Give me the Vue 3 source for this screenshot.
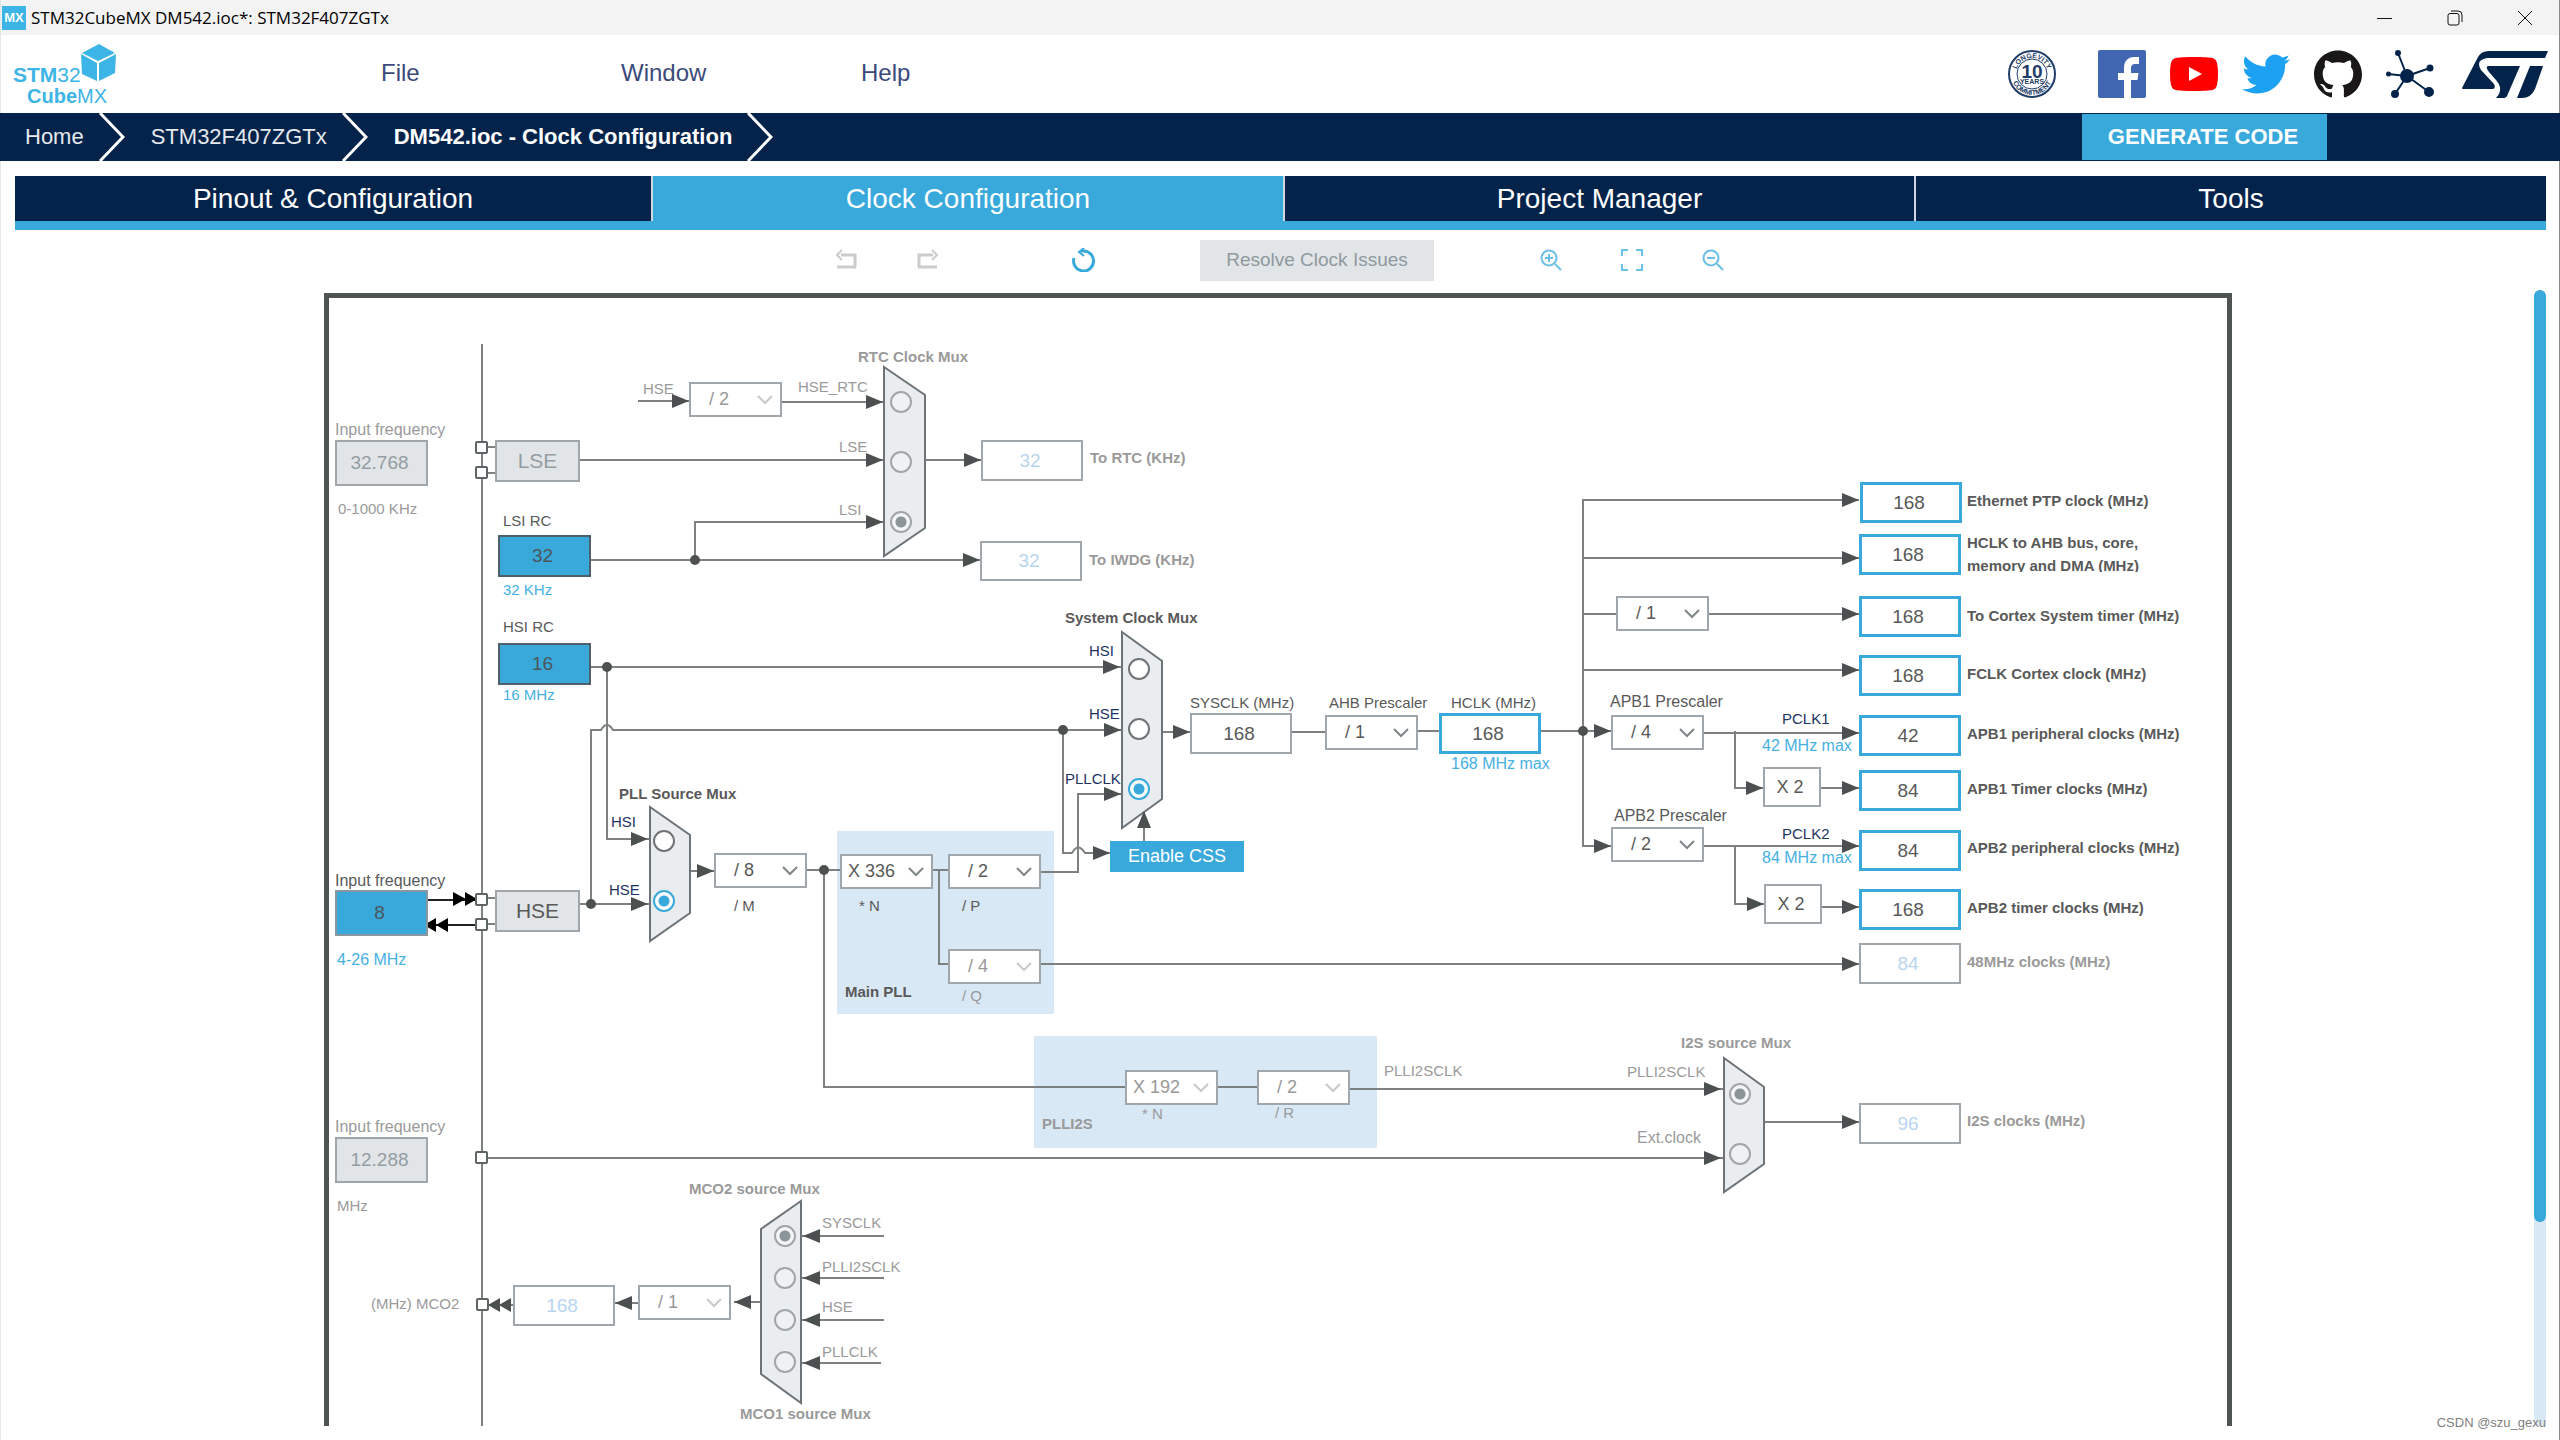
<script setup>
import { ref } from 'vue'

const menus = ['File', 'Window', 'Help']
const tabs = ['Pinout & Configuration', 'Clock Configuration', 'Project Manager', 'Tools']
const activeTab = ref('Clock Configuration')

// World coordinates of the canvas' top left corner
const ORIGIN = { x: 324, y: 293 }
const at = (x, y) => ({ left: `${x - ORIGIN.x}px`, top: `${y - ORIGIN.y}px` })
const box = (n) => ({ ...at(n.x, n.y), width: `${n.w}px`, height: `${n.h}px` })

// Text labels: y is the baseline
const labels = [
  { t: 'Input frequency', x: 335, y: 435, c: 'dim big', f: 'in-lse' },
  { t: '0-1000 KHz', x: 338, y: 514, c: 'dim' },
  { t: 'LSI RC', x: 503, y: 526, c: '', f: 'lsi' },
  { t: '32 KHz', x: 503, y: 595, c: 'blue' },
  { t: 'HSI RC', x: 503, y: 632, c: '', f: 'hsi' },
  { t: '16 MHz', x: 503, y: 700, c: 'blue' },
  { t: 'HSE', x: 643, y: 394, c: 'dim', f: 'rtc-div' },
  { t: 'HSE_RTC', x: 798, y: 392, c: 'dim', f: 'rtc-0' },
  { t: 'LSE', x: 839, y: 452, c: 'dim', f: 'rtc-1' },
  { t: 'LSI', x: 839, y: 515, c: 'dim', f: 'rtc-2' },
  { t: 'RTC Clock Mux', x: 858, y: 362, c: 'dim bold' },
  { t: 'To RTC (KHz)', x: 1090, y: 463, c: 'dim bold', f: 'o-rtc' },
  { t: 'To IWDG (KHz)', x: 1089, y: 565, c: 'dim bold', f: 'o-iwdg' },
  { t: 'System Clock Mux', x: 1065, y: 623, c: 'bold' },
  { t: 'HSI', x: 1089, y: 656, c: 'navy', f: 'sys-0' },
  { t: 'HSE', x: 1089, y: 719, c: 'navy', f: 'sys-1' },
  { t: 'PLLCLK', x: 1065, y: 784, c: 'navy', f: 'sys-2' },
  { t: 'SYSCLK (MHz)', x: 1190, y: 708, c: '', f: 'o-sysclk' },
  { t: 'AHB Prescaler', x: 1329, y: 708, c: '', f: 'ahb' },
  { t: 'HCLK (MHz)', x: 1451, y: 708, c: '', f: 'o-hclk' },
  { t: '168 MHz max', x: 1451, y: 769, c: 'blue big' },
  { t: 'APB1 Prescaler', x: 1610, y: 707, c: 'big', f: 'apb1' },
  { t: 'PCLK1', x: 1782, y: 724, c: 'navy' },
  { t: '42 MHz max', x: 1762, y: 751, c: 'blue big' },
  { t: 'APB2 Prescaler', x: 1614, y: 821, c: 'big', f: 'apb2' },
  { t: 'PCLK2', x: 1782, y: 839, c: 'navy' },
  { t: '84 MHz max', x: 1762, y: 863, c: 'blue big' },
  { t: 'Ethernet PTP clock (MHz)', x: 1967, y: 506, c: 'bold', f: 'o-eth' },
  { t: 'HCLK to AHB bus, core,\nmemory and DMA (MHz)', x: 1967, y: 546, c: 'bold cut', f: 'o-ahb' },
  { t: 'To Cortex System timer (MHz)', x: 1967, y: 621, c: 'bold', f: 'o-cortex' },
  { t: 'FCLK Cortex clock (MHz)', x: 1967, y: 679, c: 'bold', f: 'o-fclk' },
  { t: 'APB1 peripheral clocks (MHz)', x: 1967, y: 739, c: 'bold', f: 'o-apb1p' },
  { t: 'APB1 Timer clocks (MHz)', x: 1967, y: 794, c: 'bold', f: 'o-apb1t' },
  { t: 'APB2 peripheral clocks (MHz)', x: 1967, y: 853, c: 'bold', f: 'o-apb2p' },
  { t: 'APB2 timer clocks (MHz)', x: 1967, y: 913, c: 'bold', f: 'o-apb2t' },
  { t: '48MHz clocks (MHz)', x: 1967, y: 967, c: 'dim bold', f: 'o-48' },
  { t: 'I2S clocks (MHz)', x: 1967, y: 1126, c: 'dim bold', f: 'o-i2s' },
  { t: 'Input frequency', x: 335, y: 886, c: 'big', f: 'in-hse' },
  { t: '4-26 MHz', x: 337, y: 965, c: 'blue big' },
  { t: 'PLL Source Mux', x: 619, y: 799, c: 'bold' },
  { t: 'HSI', x: 611, y: 827, c: 'navy', f: 'pll-0' },
  { t: 'HSE', x: 609, y: 895, c: 'navy', f: 'pll-1' },
  { t: '/ M', x: 734, y: 911, c: '', f: 'div-m' },
  { t: '* N', x: 859, y: 911, c: '', f: 'mul-n' },
  { t: '/ P', x: 962, y: 911, c: '', f: 'div-p' },
  { t: '/ Q', x: 962, y: 1001, c: 'dim', f: 'div-q' },
  { t: 'Main PLL', x: 845, y: 997, c: 'bold' },
  { t: '* N', x: 1142, y: 1119, c: 'dim', f: 'i2s-n' },
  { t: '/ R', x: 1275, y: 1118, c: 'dim', f: 'i2s-r' },
  { t: 'PLLI2S', x: 1042, y: 1129, c: 'dim bold' },
  { t: 'PLLI2SCLK', x: 1384, y: 1076, c: 'dim' },
  { t: 'I2S source Mux', x: 1681, y: 1048, c: 'dim bold' },
  { t: 'PLLI2SCLK', x: 1627, y: 1077, c: 'dim', f: 'i2s-0' },
  { t: 'Ext.clock', x: 1637, y: 1143, c: 'dim big', f: 'i2s-1' },
  { t: 'Input frequency', x: 335, y: 1132, c: 'dim big', f: 'in-i2s' },
  { t: 'MHz', x: 337, y: 1211, c: 'dim' },
  { t: '(MHz) MCO2', x: 371, y: 1309, c: 'dim', f: 'o-mco2' },
  { t: 'MCO2 source Mux', x: 689, y: 1194, c: 'dim bold' },
  { t: 'MCO1 source Mux', x: 740, y: 1419, c: 'dim bold' },
  { t: 'SYSCLK', x: 822, y: 1228, c: 'dim', f: 'mco-0' },
  { t: 'PLLI2SCLK', x: 822, y: 1272, c: 'dim', f: 'mco-1' },
  { t: 'HSE', x: 822, y: 1312, c: 'dim', f: 'mco-2' },
  { t: 'PLLCLK', x: 822, y: 1357, c: 'dim', f: 'mco-3' },
]

const fields = [
  { id: 'in-lse', v: '32.768', x: 335, y: 440, w: 93, h: 46, c: 'gray' },
  { id: 'lsi', v: '32', x: 498, y: 535, w: 93, h: 42, c: 'source' },
  { id: 'hsi', v: '16', x: 498, y: 643, w: 93, h: 42, c: 'source' },
  { id: 'in-hse', v: '8', x: 335, y: 890, w: 93, h: 46, c: 'source soft' },
  { id: 'in-i2s', v: '12.288', x: 335, y: 1137, w: 93, h: 46, c: 'gray' },
  { id: 'o-rtc', v: '32', x: 981, y: 440, w: 102, h: 41, c: 'off' },
  { id: 'o-iwdg', v: '32', x: 980, y: 541, w: 102, h: 40, c: 'off' },
  { id: 'o-sysclk', v: '168', x: 1190, y: 713, w: 102, h: 41, c: 'plain' },
  { id: 'o-hclk', v: '168', x: 1439, y: 713, w: 102, h: 41, c: 'on' },
  { id: 'o-eth', v: '168', x: 1860, y: 482, w: 102, h: 41, c: 'on' },
  { id: 'o-ahb', v: '168', x: 1859, y: 534, w: 102, h: 41, c: 'on' },
  { id: 'o-cortex', v: '168', x: 1859, y: 596, w: 102, h: 41, c: 'on' },
  { id: 'o-fclk', v: '168', x: 1859, y: 655, w: 102, h: 41, c: 'on' },
  { id: 'o-apb1p', v: '42', x: 1859, y: 715, w: 102, h: 41, c: 'on' },
  { id: 'o-apb1t', v: '84', x: 1859, y: 770, w: 102, h: 41, c: 'on' },
  { id: 'o-apb2p', v: '84', x: 1859, y: 830, w: 102, h: 41, c: 'on' },
  { id: 'o-apb2t', v: '168', x: 1859, y: 889, w: 102, h: 41, c: 'on' },
  { id: 'o-48', v: '84', x: 1859, y: 943, w: 102, h: 41, c: 'off' },
  { id: 'o-i2s', v: '96', x: 1859, y: 1103, w: 102, h: 41, c: 'off' },
  { id: 'o-mco2', v: '168', x: 513, y: 1285, w: 102, h: 41, c: 'off' },
]

const combos = [
  { id: 'rtc-div', v: '/ 2', x: 689, y: 382, off: true },
  { id: 'ahb', v: '/ 1', x: 1325, y: 715 },
  { id: 'cortex-div', v: '/ 1', x: 1616, y: 596, name: 'Cortex prescaler' },
  { id: 'apb1', v: '/ 4', x: 1611, y: 715 },
  { id: 'apb2', v: '/ 2', x: 1611, y: 827 },
  { id: 'div-m', v: '/ 8', x: 714, y: 853 },
  { id: 'mul-n', v: 'X 336', x: 840, y: 854, wide: true },
  { id: 'div-p', v: '/ 2', x: 948, y: 854 },
  { id: 'div-q', v: '/ 4', x: 948, y: 949, off: true },
  { id: 'i2s-n', v: 'X 192', x: 1125, y: 1070, wide: true, off: true },
  { id: 'i2s-r', v: '/ 2', x: 1257, y: 1070, off: true },
  { id: 'mco-div', v: '/ 1', x: 638, y: 1285, off: true, name: 'MCO2 prescaler' },
]

const blocks = [
  { t: 'LSE', x: 495, y: 440, w: 85, h: 42, c: 'osc dimmed' },
  { t: 'HSE', x: 495, y: 890, w: 85, h: 42, c: 'osc' },
  { t: 'X 2', x: 1763, y: 767, w: 58, h: 40, c: 'times' },
  { t: 'X 2', x: 1764, y: 884, w: 58, h: 40, c: 'times' },
]

const muxes = [
  { id: 'rtc', x: 901, ys: [402, 462, 522], sel: 2, off: true },
  { id: 'sys', x: 1139, ys: [669, 729, 789], sel: 2 },
  { id: 'pll', x: 664, ys: [841, 901], sel: 1 },
  { id: 'i2s', x: 1740, ys: [1094, 1154], sel: 0, off: true },
  { id: 'mco', x: 785, ys: [1236, 1278, 1320, 1362], sel: 0, off: true },
]

const muxShapes = [
  '884,367 925,395 925,528 884,556',
  '1122,632 1162,661 1162,799 1122,828',
  '650,807 690,835 690,913 650,941',
  '1724,1058 1764,1087 1764,1164 1724,1192',
  '801,1201 761,1229 761,1374 801,1403',
]

const wires = [
  'M482 344V1426',
  'M482 447H495M482 473H495M482 898H496M482 924H496',
  'M638 401H689M782 402H884',
  'M580 460H884M925 460H981',
  'M591 560H980M695 560V522H884',
  'M591 667H1122M607 667V839H650',
  'M580 904H650M591 904V730H601Q607 720 613 730H1122',
  'M1063 730V853H1072Q1078 842 1085 853H1110M1144 841V812',
  'M690 871H714M807 870H840M824 870V1087H1125M933 870H948M939 870V964H948',
  'M1041 872H1078V794H1122M1041 964H1859',
  'M1162 732H1190M1292 732H1325M1418 731H1439M1541 731H1611',
  'M1859 500H1583V846H1611M1583 558H1859M1583 614H1616M1709 614H1859M1583 670H1859',
  'M1704 733H1859M1735 731V788H1763M1821 788H1859',
  'M1704 846H1859M1735 846V904H1764M1822 907H1859',
  'M1218 1087H1257M1350 1089H1724M487 1158H1724M1764 1122H1859',
  'M801 1236H884M801 1278H884M801 1320H884M801 1363H881M761 1302H734M638 1303H615M513 1305H488',
]

// Arrow heads: tip position and direction
const heads = [
  [689, 401, 'r'], [883, 402, 'r'], [883, 460, 'r'], [883, 522, 'r'], [981, 460, 'r'], [980, 560, 'r'],
  [1120, 667, 'r'], [1121, 730, 'r'], [1121, 794, 'r'], [1110, 853, 'r'], [1190, 732, 'r'], [1144, 811, 'u'],
  [648, 839, 'r'], [648, 904, 'r'], [714, 871, 'r'],
  [1859, 500, 'r'], [1859, 558, 'r'], [1859, 614, 'r'], [1859, 670, 'r'], [1859, 733, 'r'], [1859, 788, 'r'],
  [1859, 846, 'r'], [1859, 907, 'r'], [1859, 964, 'r'], [1859, 1122, 'r'],
  [1611, 731, 'r'], [1611, 846, 'r'], [1763, 788, 'r'], [1764, 904, 'r'],
  [1721, 1089, 'r'], [1721, 1158, 'r'],
  [803, 1236, 'l'], [803, 1278, 'l'], [803, 1320, 'l'], [803, 1363, 'l'], [734, 1302, 'l'], [615, 1303, 'l'],
]
const headPoints = ([x, y, d]) =>
  d === 'r' ? `${x - 17},${y - 7} ${x},${y} ${x - 17},${y + 7}`
  : d === 'l' ? `${x + 17},${y - 7} ${x},${y} ${x + 17},${y + 7}`
  : `${x - 7},${y + 17} ${x},${y} ${x + 7},${y + 17}`

const dots = [[695, 560], [607, 667], [1063, 730], [591, 904], [824, 870], [1583, 731]]
const pins = [[476, 442], [476, 467], [476, 894], [476, 919], [476, 1152], [477, 1299]]
</script>

<template>
  <div class="app">
    <header class="titlebar">
      <span class="mx">MX</span>
      <span class="title">STM32CubeMX DM542.ioc*: STM32F407ZGTx</span>
      <div class="win">
        <button aria-label="Minimize"><svg width="16" height="16"><path d="M0 8.5H15" /></svg></button>
        <button aria-label="Restore"><svg width="16" height="16"><rect x="1" y="3.5" width="11" height="11.5" rx="2" /><path d="M4 1H11Q15 1 15 5V12" /></svg></button>
        <button aria-label="Close"><svg width="16" height="16"><path d="M1 1L15 15M15 1L1 15" /></svg></button>
      </div>
    </header>

    <div class="brand">
      <svg class="logo" width="110" height="64" viewBox="0 0 110 64" role="img" aria-label="STM32 CubeMX">
        <g fill="#3cb4e6">
          <polygon points="86,0 102,9 85,17 69,9" />
          <polygon points="68,10 84,19 84,37 69,30" />
          <polygon points="103,10 86,19 86,37 102,29" />
          <text x="0" y="38" font-size="21"><tspan font-weight="bold">STM</tspan>32</text>
          <text x="14" y="59" font-size="20"><tspan font-weight="bold">Cube</tspan>MX</text>
        </g>
      </svg>
      <nav class="menu">
        <button v-for="m in menus" :key="m">{{ m }}</button>
      </nav>
      <div class="links">
        <a class="badge" href="#" aria-label="10 years longevity commitment">
          <svg width="48" height="48" viewBox="0 0 48 48" fill="none" stroke="#1f3d68">
            <path id="arc-top" d="M8 24A16 16 0 0 1 40 24" stroke="none" />
            <path id="arc-bottom" d="M3 24A21 21 0 0 0 45 24" stroke="none" />
            <circle cx="24" cy="24" r="23" stroke-width="2" />
            <circle cx="24" cy="24" r="15" stroke-width="1" />
            <g fill="#1f3d68" stroke="none" font-weight="bold" text-anchor="middle">
              <text font-size="7"><textPath href="#arc-top" startOffset="50%">LONGEVITY</textPath></text>
              <text font-size="7"><textPath href="#arc-bottom" startOffset="50%">COMMITMENT</textPath></text>
              <text x="24" y="28" font-size="19">10</text>
              <text x="24" y="34" font-size="7">YEARS</text>
            </g>
          </svg>
        </a>
        <a href="#" aria-label="Facebook">
          <svg width="48" height="48" viewBox="0 0 48 48">
            <rect width="48" height="48" rx="2" fill="#4267b2" />
            <path fill="#fff" d="M26 48V30H20V23H26V18C26 11 30 7 36 7H41V14H37.500C34 14 33 16 33 18.500V23H40.500L39.500 30H33V48Z" />
          </svg>
        </a>
        <a href="#" aria-label="YouTube">
          <svg width="48" height="48" viewBox="0 0 48 48">
            <path fill="#f00" d="M24 7C34 7 40 7.500 42.500 8Q46 9 47 13Q48 17 48 24T47 35Q46 39 42.500 40C40 40.500 34 41 24 41S8 40.500 5.500 40Q2 39 1 35Q0 31 0 24T1 13Q2 9 5.500 8C8 7.500 14 7 24 7Z" />
            <polygon fill="#fff" points="19,17 32,24 19,31" />
          </svg>
        </a>
        <a href="#" aria-label="Twitter">
          <svg width="48" height="48" viewBox="0 0 24 24"><path fill="#1da1f2" d="M23.953 4.570a10 10 0 01-2.825.775 4.958 4.958 0 002.163-2.723c-.951.555-2.005.959-3.127 1.184a4.920 4.920 0 00-8.384 4.482C7.690 8.095 4.067 6.130 1.640 3.162a4.822 4.822 0 00-.666 2.475c0 1.710.870 3.213 2.188 4.096a4.904 4.904 0 01-2.228-.616v.060a4.923 4.923 0 003.946 4.827 4.996 4.996 0 01-2.212.085 4.936 4.936 0 004.604 3.417 9.867 9.867 0 01-6.102 2.105c-.390 0-.779-.023-1.170-.067a13.995 13.995 0 007.557 2.209c9.053 0 13.998-7.496 13.998-13.985 0-.210 0-.420-.015-.630A9.935 9.935 0 0024 4.590z" /></svg>
        </a>
        <a href="#" aria-label="GitHub">
          <svg width="48" height="48" viewBox="0 0 24 24"><path fill="#191717" d="M12 .297c-6.630 0-12 5.373-12 12 0 5.303 3.438 9.800 8.205 11.385.600.113.820-.258.820-.577 0-.285-.010-1.040-.015-2.040-3.338.724-4.042-1.610-4.042-1.610C4.422 18.070 3.633 17.700 3.633 17.700c-1.087-.744.084-.729.084-.729 1.205.084 1.838 1.236 1.838 1.236 1.070 1.835 2.809 1.305 3.495.998.108-.776.417-1.305.760-1.605-2.665-.300-5.466-1.332-5.466-5.930 0-1.310.465-2.380 1.235-3.220-.135-.303-.540-1.523.105-3.176 0 0 1.005-.322 3.300 1.230.960-.267 1.980-.399 3-.405 1.020.006 2.040.138 3 .405 2.280-1.552 3.285-1.230 3.285-1.230.645 1.653.240 2.873.120 3.176.765.840 1.230 1.910 1.230 3.220 0 4.610-2.805 5.625-5.475 5.920.420.360.810 1.096.810 2.220 0 1.606-.015 2.896-.015 3.286 0 .315.210.690.825.570C20.565 22.092 24 17.592 24 12.297c0-6.627-5.373-12-12-12" /></svg>
        </a>
        <a href="#" aria-label="Community">
          <svg width="48" height="48" viewBox="0 0 48 48">
            <g fill="#03234b" stroke="#03234b" stroke-width="2">
              <path d="M21 26L12 3M21 26L44 18M21 26L2 24M21 26L9 44M21 26L43 42" />
              <circle cx="21" cy="26" r="6" /><circle cx="12" cy="3" r="2" /><circle cx="44" cy="18" r="2.500" />
              <circle cx="2.500" cy="24" r="1.500" /><circle cx="9" cy="44" r="3" /><circle cx="43" cy="42" r="4" />
            </g>
          </svg>
        </a>
        <a class="st" href="#" aria-label="STMicroelectronics">
          <svg width="86" height="47" viewBox="0 0 86 47">
            <g fill="#03234b">
              <path d="M86 0H27Q19 0 16 6L0 37Q0 38 1 38H31Q34 37 32 33L19 19Q13 9 25 7H83Z" />
              <path d="M26 15H58L45 45Q44 47 42 47H34Q39 42 38 36Q37 32 34 29L27 21Q23 16 26 15Z" />
              <path d="M68 15H81L73 38Q69 47 60 47H55Z" />
            </g>
          </svg>
        </a>
      </div>
    </div>

    <nav class="crumbs">
      <a class="first" href="#">Home</a>
      <svg width="26" height="48"><path d="M1 0L24 24L1 48" /></svg>
      <a href="#">STM32F407ZGTx</a>
      <svg width="26" height="48"><path d="M1 0L24 24L1 48" /></svg>
      <a class="here" href="#">DM542.ioc - Clock Configuration</a>
      <svg width="26" height="48"><path d="M1 0L24 24L1 48" /></svg>
      <button class="generate">GENERATE CODE</button>
    </nav>

    <div class="tabs" role="tablist">
      <button v-for="t in tabs" :key="t" role="tab" :aria-selected="t === activeTab" :class="{ active: t === activeTab }" @click="activeTab = t">{{ t }}</button>
    </div>

    <div class="toolbar">
      <button aria-label="Undo"><svg width="22" height="22" stroke="#ccc"><path d="M5 6H19V18M1 18H20" stroke-width="3" /><path d="M6 1L1 6L6 11" stroke-width="2" /></svg></button>
      <button class="redo" aria-label="Redo"><svg width="22" height="22" stroke="#ccc"><path d="M17 6H3V18M2 18H21" stroke-width="3" /><path d="M16 1L21 6L16 11" stroke-width="2" /></svg></button>
      <button class="refresh" aria-label="Reset"><svg width="24" height="24" stroke="#39a9dc" stroke-width="3"><path d="M2 10A10 10 0 1 0 12 3H9" /><path d="M12 0L7 4L12 8" stroke-width="2" /></svg></button>
      <button class="resolve" disabled>Resolve Clock Issues</button>
      <button aria-label="Zoom in"><svg width="22" height="22" stroke="#6bbfe8" stroke-width="2"><circle cx="9" cy="9" r="7.500" /><path d="M15 15L21 21M5 9H13M9 5V13" /></svg></button>
      <button class="fit" aria-label="Fit"><svg width="22" height="22" stroke="#6bbfe8" stroke-width="2"><path d="M1 7V1H7M15 1H21V7M21 15V21H15M7 21H1V15" /></svg></button>
      <button class="fit" aria-label="Zoom out"><svg width="22" height="22" stroke="#6bbfe8" stroke-width="2"><circle cx="9" cy="9" r="7.500" /><path d="M15 15L21 21M5 9H13" /></svg></button>
    </div>

    <main class="stage">
      <div class="view">
        <div class="canvas">
          <svg class="wires" width="1908" height="1133" :viewBox="`${ORIGIN.x} ${ORIGIN.y} 1908 1133`">
            <rect class="group" x="837" y="831" width="217" height="183" />
            <rect class="group" x="1034" y="1036" width="343" height="112" />
            <path v-for="w in wires" :key="w" class="wire" :d="w" />
            <g stroke="#222" stroke-width="2"><path d="M428 900H476M428 925H476" /></g>
            <g fill="#000">
              <polygon points="453,892 466,899 453,906" /><polygon points="465,892 477,899 465,906" />
              <polygon points="436,918 424,925 436,932" /><polygon points="448,918 436,925 448,932" />
            </g>
            <g fill="#4c5050"><polygon points="500,1298 488,1305 500,1312" /><polygon points="511,1298 499,1305 511,1312" /></g>
            <polygon v-for="p in muxShapes" :key="p" class="mux" :points="p" />
            <polygon v-for="h in heads" :key="h.join()" class="head" :points="headPoints(h)" />
            <circle v-for="d in dots" :key="d.join()" class="head" :cx="d[0]" :cy="d[1]" r="5" />
            <rect v-for="p in pins" :key="p.join()" class="pin" :x="p[0]" :y="p[1]" width="11" height="11" rx="1" />
          </svg>

          <template v-for="l in labels" :key="l.t + l.x + l.y">
            <label v-if="l.f" :for="l.f" :class="['lbl', l.c]" :style="at(l.x, l.y - 15)">{{ l.t }}</label>
            <span v-else :class="['lbl', l.c]" :style="at(l.x, l.y - 15)">{{ l.t }}</span>
          </template>

          <input v-for="f in fields" :id="f.id" :key="f.id" type="text" :value="f.v" readonly :class="['field', f.c]" :style="box(f)" />

          <div v-for="b in blocks" :key="b.y" :class="['block', b.c]" :style="box(b)">{{ b.t }}</div>

          <div v-for="c in combos" :key="c.id" :class="['combo', { off: c.off, wide: c.wide }]" :style="at(c.x, c.y)">
            <select :id="c.id" :aria-label="c.name" :disabled="c.off"><option>{{ c.v }}</option></select>
            <svg width="16" height="10"><path d="M1 1L8 8L15 1" /></svg>
          </div>

          <template v-for="m in muxes" :key="m.id">
            <input v-for="(y, i) in m.ys" :id="`${m.id}-${i}`" :key="y" class="radio" type="radio" :name="m.id" :checked="i === m.sel" :disabled="m.off" :style="at(m.x - 11, y - 11)" />
          </template>

          <button class="css" :style="at(1110, 841)">Enable CSS</button>
        </div>
      </div>
      <div class="scroll"><div class="thumb"></div></div>
      <span class="mark">CSDN @szu_gexu</span>
    </main>
  </div>
</template>

<style>
body { background: #fff; }
</style>

<style scoped>
.app, .app * { box-sizing: border-box; }
.app {
  font-family: "Liberation Sans", Arial, sans-serif;
  background: #fff;
  color: #595959;
  border-right: 1px solid #8a8a8a;
  border-left: 1px solid #e6e6e6;
}
button { font-family: inherit; border: 0; padding: 0; margin: 0; background: none; }
a { text-decoration: none; color: inherit; }
svg { display: block; flex: none; }
.win svg, .crumbs svg, .toolbar svg, .combo svg { fill: none; }

.titlebar { display: flex; align-items: center; height: 35px; padding: 0 26px 0 1px; background: #f3f3f3; }
.mx { width: 24px; height: 24px; background: #3cb4e6; color: #fff; font: bold 13px/24px "Liberation Sans", sans-serif; text-align: center; }
.title { margin-left: 5px; flex: 1; color: #000; font: 17px/24px "Open Sans", sans-serif; }
.win { display: flex; gap: 54px; }
.win svg { stroke: #111; stroke-width: 1px; }

.brand { display: flex; align-items: center; height: 78px; padding: 0 11px 0 12px; }
.logo { margin-right: 258px; margin-top: 4px; }
.logo text { font-family: "Liberation Sans", sans-serif; }
.menu { display: flex; flex: 1; padding-bottom: 2px; }
.menu button { width: 240px; text-align: left; font-size: 24px; color: #3b4a7a; }
.links { display: flex; align-items: center; gap: 24px; }
.badge { margin-right: 18px; }
.st { margin-left: 4px; }

.crumbs { display: flex; align-items: center; height: 48px; background: #03234b; color: #e6e9ed; font-size: 22px; margin: 0 -1px; }
.crumbs svg { stroke: #fff; stroke-width: 3px; }
.crumbs a { padding: 0 15px 0 26px; }
.crumbs a.first { padding: 0 15px 0 25px; }
.crumbs a.here { color: #fff; font-weight: bold; }
.generate { margin-left: auto; margin-right: 233px; width: 245px; height: 46px; padding-right: 3px; background: #39a9dc; color: #fff; font-size: 22px; font-weight: bold; }

.tabs { display: grid; grid-template-columns: 638fr 632fr 631fr 630fr; margin: 15px 13px 0 14px; border-bottom: 9px solid #39a9dc; }
.tabs button { height: 45px; background: #03234b; color: #fff; font-size: 28px; border-right: 2px solid #cfd8e2; }
.tabs button:last-child { border-right: 0; }
.tabs button.active { background: #39a9dc; }

.toolbar { display: flex; align-items: center; height: 60px; padding-left: 835px; }
.redo { margin-left: 58px; }
.refresh { margin-left: 134px; }
.resolve { width: 234px; height: 41px; margin: 0 106px 0 104px; background: #e1e5e8; color: #8f999e; font-size: 19px; }
.fit { margin-left: 59px; }

.stage { position: relative; display: flex; padding: 0 13px 14px 21px; }
.view { flex: 1; padding-top: 3px; }
.canvas { position: relative; width: 1908px; height: 1133px; margin: 0 auto; border: 5px solid #4f5353; border-bottom: 0; }
.canvas > * { position: absolute; margin: -5px 0 0 -5px; }
.wires { left: 0; top: 0; }
.group { fill: #d9e8f5; }
.wire { fill: none; stroke: #7d8181; stroke-width: 2px; }
.mux { fill: #e9edf0; stroke: #6d7478; stroke-width: 2px; }
.head { fill: #4c5050; }
.pin { fill: #fff; stroke: #5e6365; stroke-width: 2px; }

.lbl { font-size: 15px; line-height: 20px; white-space: pre; color: #595959; }
.lbl.big { font-size: 16px; }
.lbl.bold { font-weight: bold; }
.lbl.dim { color: #9a9a9a; }
.lbl.blue { color: #46b1e3; }
.lbl.navy { color: #1d3461; }
.lbl.cut { line-height: 23px; height: 41px; overflow: hidden; }

.field { padding: 0 4px 0 0; text-align: center; font: 19px "Liberation Sans", sans-serif; color: #595959; background: #fff; border: 2px solid #a0a7ac; border-radius: 0; outline: 0; }
.field.gray { background: #e1e5e8; color: #949da2; }
.field.source { background: #39a8db; color: #4d5759; border-color: #4f6068; }
.field.soft { border-color: #8b979e; }
.field.on { border: 3px solid #39a9dc; }
.field.off { color: #b9d5ee; }

.block { display: flex; align-items: center; justify-content: center; border: 2px solid #a0a7ac; padding-right: 4px; }
.osc { font-size: 21px; background: #e1e5e8; padding-right: 0; }
.dimmed { color: #949da2; }
.times { font-size: 18px; background: #fff; }

.combo { width: 93px; height: 35px; }
.combo select { appearance: none; width: 100%; height: 100%; margin: 0; padding: 0 0 2px 18px; font: 18px "Liberation Sans", sans-serif; color: #595959; background: #fff; border: 2px solid #a0a7ac; border-radius: 0; opacity: 1; }
.combo.wide select { padding-left: 6px; }
.combo svg { position: absolute; right: 9px; top: 13px; stroke: #7f8588; stroke-width: 2px; pointer-events: none; }
.combo.off select { color: #989898; }
.combo.off svg { stroke: #c6cacc; }

.radio { appearance: none; width: 22px; height: 22px; border: 2px solid #707476; border-radius: 50%; background: #fff; }
.radio:checked { border-color: #39a9dc; background: radial-gradient(circle, #39a9dc 0 5px, #fff 6px); }
.radio:disabled { border-color: #a0a6aa; background: #eff1f3; }
.radio:disabled:checked { background: radial-gradient(circle, #8b9499 0 5px, #f4f5f6 6px); }

.css { width: 134px; height: 31px; background: #39a8db; color: #fff; font-size: 18px; }

.scroll { width: 12px; background: #d9e8f5; border-radius: 6px 6px 0 0; }
.thumb { height: 82%; background: #39a9dc; border-radius: 6px; }
.mark { position: absolute; right: 13px; bottom: 7px; font-size: 13px; line-height: 20px; color: #808080; text-shadow: 0 0 1px #fff; }
</style>
